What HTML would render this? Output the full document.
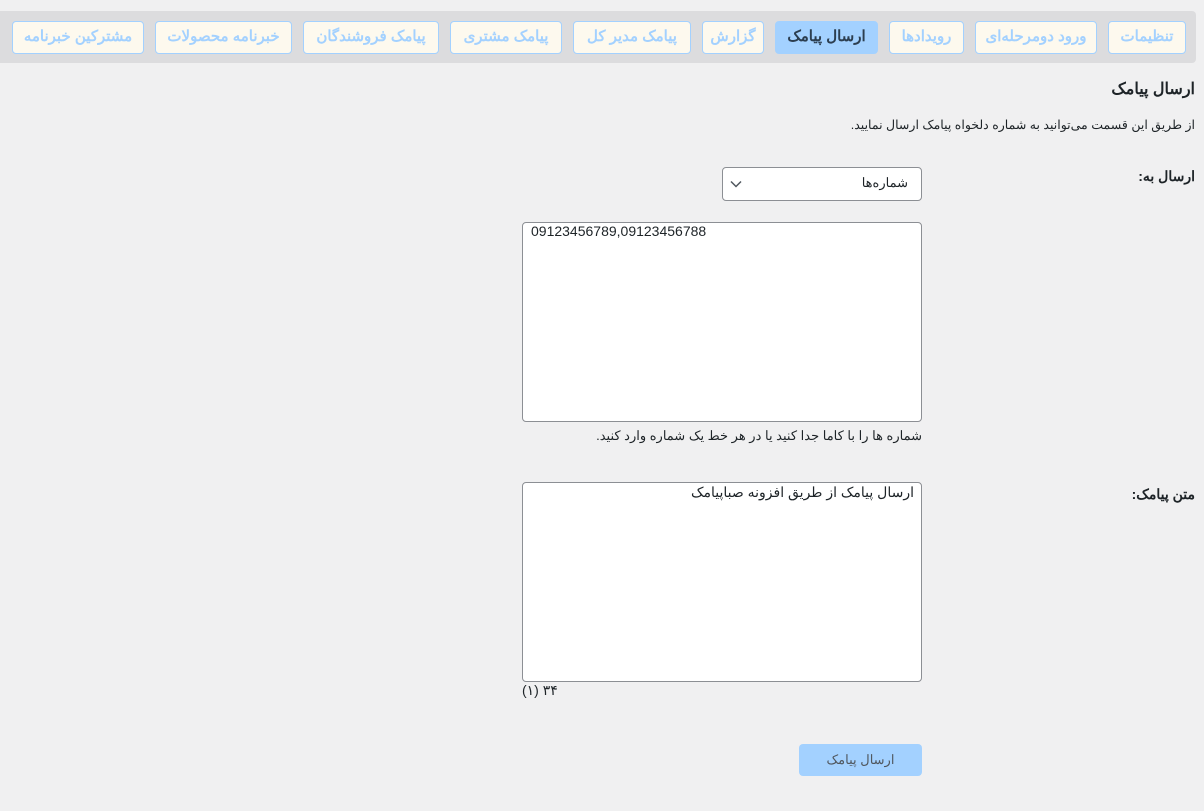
<!DOCTYPE html>
<html dir="rtl"><head><meta charset="utf-8"><style>
*{box-sizing:border-box;margin:0;padding:0}
body{width:1204px;height:811px;background:#f0f0f1;font-family:"Liberation Sans","Noto Sans CJK SC",sans-serif;color:#1d2327;position:relative;overflow:hidden}
.bar{position:absolute;left:0;top:11px;width:1196px;height:52px;background:#dcdcde;border-radius:0 4px 4px 0}
.tab{position:absolute;top:21px;height:33px;background:#fdf9ee;border:1px solid #a3d1ff;border-radius:4px;color:#a3d1ff;font-weight:bold;font-size:15px;line-height:30px;text-align:center;white-space:nowrap}
.tab.a{background:#a3d1ff;color:#2c3e50}
.t{position:absolute;white-space:nowrap}
.box{position:absolute;background:#fff;border:1px solid #8c8f94;border-radius:4px}
</style></head><body>
<div class="bar"></div>
<div class="tab" style="left:1108px;width:78px">تنظیمات</div>
<div class="tab" style="left:975px;width:122px">ورود دومرحله‌ای</div>
<div class="tab" style="left:889px;width:75px">رویدادها</div>
<div class="tab a" style="left:775px;width:103px">ارسال پیامک</div>
<div class="tab" style="left:702px;width:62px">گزارش</div>
<div class="tab" style="left:573px;width:118px">پیامک مدیر کل</div>
<div class="tab" style="left:450px;width:112px">پیامک مشتری</div>
<div class="tab" style="left:303px;width:136px">پیامک فروشندگان</div>
<div class="tab" style="left:155px;width:137px">خبرنامه محصولات</div>
<div class="tab" style="left:12px;width:132px">مشترکین خبرنامه</div>

<div class="t" style="right:9px;top:79px;font-size:16px;font-weight:bold">ارسال پیامک</div>
<div class="t" style="right:9px;top:117px;font-size:12.5px">از طریق این قسمت می‌توانید به شماره دلخواه پیامک ارسال نمایید.</div>
<div class="t" style="right:9px;top:168px;font-size:14px;font-weight:bold">ارسال به:</div>
<div class="box" style="left:722px;top:167px;width:200px;height:34px"></div>
<div class="t" style="right:296px;top:175px;font-size:13px">شماره‌ها</div>
<svg style="position:absolute;left:730px;top:180px" width="12" height="8" viewBox="0 0 12 8"><path d="M1 1.5L6 6.5L11 1.5" fill="none" stroke="#50575e" stroke-width="1.5"/></svg>
<div class="box" style="left:522px;top:222px;width:400px;height:200px"></div>
<div class="t" dir="ltr" style="left:531px;top:223px;font-size:14px">09123456789,09123456788</div>
<div class="t" style="right:282px;top:428px;font-size:13px">شماره ها را با کاما جدا کنید یا در هر خط یک شماره وارد کنید.</div>
<div class="t" style="right:9px;top:486px;font-size:14px;font-weight:bold">متن پیامک:</div>
<div class="box" style="left:522px;top:482px;width:400px;height:200px"></div>
<div class="t" style="right:290px;top:484px;font-size:14px">ارسال پیامک از طریق افزونه صباپیامک</div>
<div class="t" dir="ltr" style="left:522px;top:682px;font-size:14px;unicode-bidi:bidi-override">(۱) ۳۴</div>
<div style="position:absolute;left:799px;top:744px;width:123px;height:32px;background:#a3d1ff;border-radius:4px;color:#50575e;font-size:13px;line-height:31px;text-align:center">ارسال پیامک</div>
</body></html>
